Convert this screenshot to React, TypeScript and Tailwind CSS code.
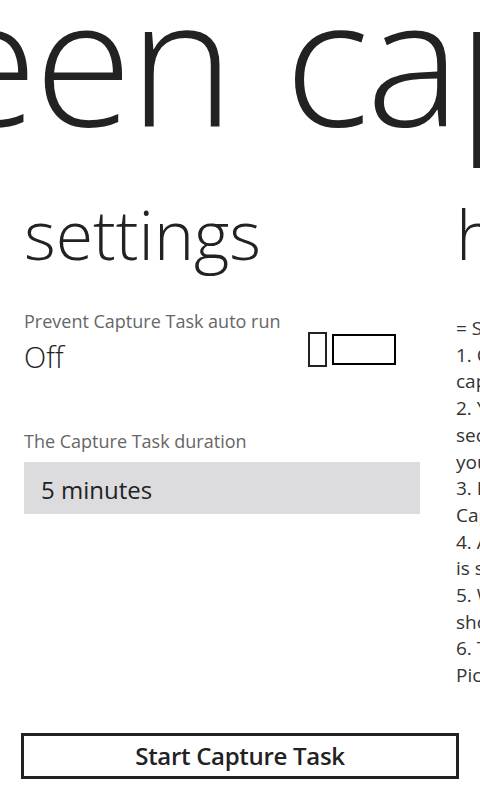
import React from "react";

const font = { fontFamily: '"Open Sans", "Noto Sans", sans-serif' };

function ToggleSwitch() {
    return (
        <div className="flex items-center gap-[5px] mr-6 mt-[2px]">
            <div className="w-[19px] h-[35px] border-[2px] border-[#222222] bg-white" />
            <div className="w-[64px] h-[31px] border-[2px] border-black bg-white" />
        </div>
    );
}

export default function App() {
    return (
        <div className="w-[480px] h-[800px] overflow-hidden bg-white flex flex-col text-[#222222]" style={font}>
            <div className="ml-[-288px] mt-[-32px] whitespace-nowrap text-[178px] font-light leading-none tracking-[-3px] [word-spacing:10px]">
                screen capture
            </div>

            <div className="flex">
                <section className="w-[432px] shrink-0 pl-6 pr-3">
                    <h2 className="mt-[54px] text-[68px] font-light leading-none">settings</h2>

                    <div className="mt-[44px] text-[18px] leading-none text-[#666666]">
                        Prevent Capture Task auto run
                    </div>
                    <div className="flex items-start justify-between">
                        <div className="mt-[12px] text-[29px] font-light leading-none">Off</div>
                        <ToggleSwitch />
                    </div>

                    <div className="mt-[61px] text-[18px] leading-none text-[#666666]">
                        The Capture Task duration
                    </div>
                    <div className="mt-[12px] w-full h-[52px] bg-[#dcdbdd] pl-[17px] pt-[16px] text-[24px] leading-none">
                        5 minutes
                    </div>
                </section>

                <section className="w-[432px] shrink-0 pl-6">
                    <h2 className="mt-[54px] text-[68px] font-light leading-none">help</h2>
                    <p className="mt-[47px] w-[400px] text-[19px] leading-[26.7px] text-[#333333]">
                        = Steps =<br />
                        1. Click the button to start the screen<br />
                        capture task.<br />
                        2. You have a few seconds to switch the<br />
                        second app, the capture task runs while<br />
                        you work.<br />
                        3. Press the camera button to take a<br />
                        Capture Task screenshot.<br />
                        4. After capturing, the duration timer<br />
                        is shown on the screen.<br />
                        5. When the time is up, the task is<br />
                        shown as finished.<br />
                        6. The captured images are saved to the<br />
                        Pictures hub.
                    </p>
                </section>
            </div>

            <div className="mt-auto px-[21px] pb-[21px]">
                <button className="w-full h-[46px] border-[3px] border-[#222222] bg-white text-[24px] font-semibold leading-none tracking-[-0.3px] text-[#222222]">
                    Start Capture Task
                </button>
            </div>
        </div>
    );
}
